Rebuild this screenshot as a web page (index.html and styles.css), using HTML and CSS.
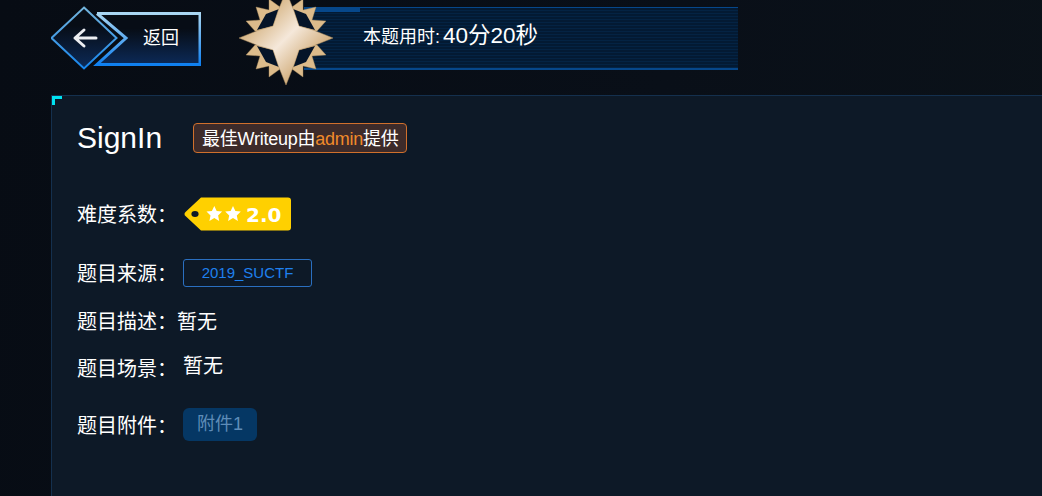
FILE: index.html
```html
<!DOCTYPE html>
<html lang="zh-CN">
<head>
    <meta charset="UTF-8">
    <meta name="viewport" content="width=device-width, initial-scale=1.0">
    <title>SignIn</title>
    <link rel="stylesheet" href="styles.css">
</head>
<body>
    <div class="top-bar">
        <a class="back-btn" href="#">
            <svg class="back-shape" width="150" height="64" viewBox="0 0 150 64">
                <defs>
                    <linearGradient id="edge" x1="0" y1="0" x2="0" y2="1">
                        <stop offset="0" stop-color="#a9d6f2"/>
                        <stop offset="1" stop-color="#0f80f0"/>
                    </linearGradient>
                    <linearGradient id="diamondEdge" x1="0" y1="0" x2="0" y2="1">
                        <stop offset="0" stop-color="#73b4dc"/>
                        <stop offset="1" stop-color="#1686ee"/>
                    </linearGradient>
                    <linearGradient id="fill" x1="0" y1="0" x2="0" y2="1">
                        <stop offset="0.3" stop-color="#070d16"/>
                        <stop offset="1" stop-color="#0c2a58"/>
                    </linearGradient>
                </defs>
                <polygon points="46,7 149,7 149,59 46,59 75,32" fill="url(#fill)"/>
                <polyline points="46,7.5 149,7.5 149,58.5 46,58.5 75,32 46,7.5" fill="none" stroke="url(#edge)" stroke-width="3"/>
                <polygon points="33,1.5 65.5,32 33,62.5 0.5,32" fill="url(#fill)" stroke="url(#diamondEdge)" stroke-width="2"/>
                <path d="M24 32H45M33 24L24 32L33 40" fill="none" stroke="#eceef2" stroke-width="3" stroke-linecap="round" stroke-linejoin="round"/>
            </svg>
            <span class="back-text">返回</span>
        </a>
        <div class="timer-bar">
            <svg class="medal" width="98" height="98" viewBox="-49 -49 98 98">
                <defs>
                    <linearGradient id="gold" gradientUnits="userSpaceOnUse" x1="-30" y1="-30" x2="30" y2="30">
                        <stop offset="0" stop-color="#cda66c"/>
                        <stop offset="0.5" stop-color="#f5e8da"/>
                        <stop offset="1" stop-color="#c99f64"/>
                    </linearGradient>
                    <g id="quadrant">
                        <polygon fill="#dcbb8b" stroke="#a98a5c" stroke-width="0.4" points="-6,-31 -17,-39 -17,-28 -30,-31 -26,-18 -40,-17 -31,-7 -10,-6"/>
                        <polygon fill="#051428" points="-7,-29 -20,-24 -29,-8 -13,-12"/>
                    </g>
                </defs>
                <use href="#quadrant"/>
                <use href="#quadrant" transform="scale(-1,1)"/>
                <use href="#quadrant" transform="scale(1,-1)"/>
                <use href="#quadrant" transform="scale(-1,-1)"/>
                <polygon fill="url(#gold)" stroke="#a98a5c" stroke-width="0.5" points="0,-47 8,-27 13,-12 27,-8 47,0 27,8 13,12 8,27 0,47 -8,27 -13,12 -27,8 -47,0 -27,-8 -13,-12 -8,-27"/>
            </svg>
            <span class="timer-label">本题用时:</span>
            <span class="timer-value">40分20秒</span>
        </div>
    </div>

    <div class="panel">
        <span class="corner"></span>
        <div class="title-row">
            <h1 class="title">SignIn</h1>
            <span class="writeup-tag">最佳Writeup由<span class="author">admin</span>提供</span>
        </div>
        <div class="row row-level">
            <span class="label">难度系数：</span>
            <svg class="level-badge" width="108" height="34" viewBox="0 0 108 34">
                <path d="M17 .5H104a3 3 0 0 1 3 3V30.5a3 3 0 0 1-3 3H17L1.5 19a2.5 2.5 0 0 1 0-4z" fill="#ffd000"/>
                <ellipse cx="11" cy="17" rx="3.6" ry="3" fill="#0d1927"/>
                <path d="M30.3 9l2.4 5 5.4.6-4 3.8 1.1 5.5-4.9-2.8-4.9 2.8 1.1-5.5-4-3.8 5.4-.6z" fill="#fff"/>
                <path d="M49 9l2.4 5 5.4.6-4 3.8 1.1 5.5-4.9-2.8-4.9 2.8 1.1-5.5-4-3.8 5.4-.6z" fill="#fff"/>
                <text class="level-num" x="62" y="24.5">2.0</text>
            </svg>
        </div>
        <div class="row row-source">
            <span class="label">题目来源：</span>
            <span class="source-tag">2019_SUCTF</span>
        </div>
        <div class="row row-desc">
            <span class="label">题目描述：</span>
            <span class="value">暂无</span>
        </div>
        <div class="row row-scene">
            <span class="label">题目场景：</span>
            <span class="value value-scene">暂无</span>
        </div>
        <div class="row row-file">
            <span class="label">题目附件：</span>
            <a class="file-btn" href="#">附件1</a>
        </div>
    </div>
</body>
</html>
```

FILE: styles.css
```css
html, body { height: 100%; }
body {
    display: flex;
    flex-direction: column;
    margin: 0;
    overflow: hidden;
    color: #fff;
    font-family: "Liberation Sans", "Noto Sans CJK SC", sans-serif;
    background: linear-gradient(100deg, #070c14 0%, #090f18 60%, #0b1219 100%);
}
a { text-decoration: none; color: inherit; }

.top-bar { display: flex; align-items: flex-start; flex: none; height: 95px; padding-left: 51px; box-sizing: border-box; }

.back-btn { position: relative; display: block; width: 150px; height: 64px; margin-top: 6px; }
.back-shape { display: block; }
.back-text { position: absolute; left: 92px; top: 20px; font-size: 18px; line-height: 24px; }

.timer-bar {
    position: relative;
    display: flex;
    align-items: baseline;
    width: 434px;
    height: 63px;
    margin: 7px 0 0 103px;
    padding: 14px 0 0 59px;
    box-sizing: border-box;
    border-top: 1px solid #06478a;
    border-bottom: 2px solid #06478a;
    background: repeating-linear-gradient(180deg, #031a33 0, #031a33 2px, #042343 2px, #042343 3px);
}
.timer-bar::before { content: ""; position: absolute; left: 0; top: 0; width: 56px; height: 4px; background: #06478a; }
.medal { position: absolute; left: -67px; top: -19px; }
.timer-label { font-size: 18px; line-height: 28px; }
.timer-value { font-size: 22.5px; line-height: 28px; margin-left: 3px; }

.panel {
    position: relative;
    flex: 1;
    margin-left: 51px;
    padding: 27px 0 0 25px;
    border-top: 1px solid #14304e;
    border-left: 1px solid #14304e;
    background: #0d1927;
}
.corner { position: absolute; left: 0; top: 0; width: 7px; height: 6px; border-top: 3px solid #00e1f0; border-left: 3px solid #00e1f0; }

.title-row { display: flex; align-items: center; height: 30px; }
.title { margin: 0 31px 0 0; font-size: 30px; font-weight: 400; line-height: 28px; }
.writeup-tag {
    height: 30px;
    padding: 0 7px 0 8px;
    box-sizing: border-box;
    border: 1px solid #d0702c;
    border-radius: 4px;
    background: #3d2b2a;
    font-size: 18px;
    line-height: 31px;
    letter-spacing: -0.25px;
    white-space: nowrap;
}
.author { color: #f08a2a; }

.row { display: flex; align-items: center; font-size: 20px; line-height: 28px; }
.label, .value { padding-top: 2px; white-space: nowrap; }
.row-level { margin-top: 44px; height: 34px; }
.level-badge { margin-left: 7px; }
.level-num { font-family: "DejaVu Sans", sans-serif; font-size: 20px; font-weight: 700; fill: #fff; }

.row-source { margin-top: 27px; }
.source-tag {
    margin-left: 6px;
    width: 129px;
    height: 28px;
    box-sizing: border-box;
    border: 1px solid #2a6fc0;
    border-radius: 3px;
    color: #1f80ee;
    font-size: 15px;
    line-height: 26px;
    text-align: center;
}

.row-desc { margin-top: 18px; }
.row-scene { margin-top: 17px; }
.value-scene { margin-left: 6px; position: relative; top: -3px; }

.row-file { margin-top: 25px; height: 33px; }
.file-btn {
    margin-left: 6px;
    width: 74px;
    height: 33px;
    border-radius: 6px;
    background: #053764;
    color: #5e8cb8;
    font-size: 18px;
    line-height: 33px;
    text-align: center;
}
```
